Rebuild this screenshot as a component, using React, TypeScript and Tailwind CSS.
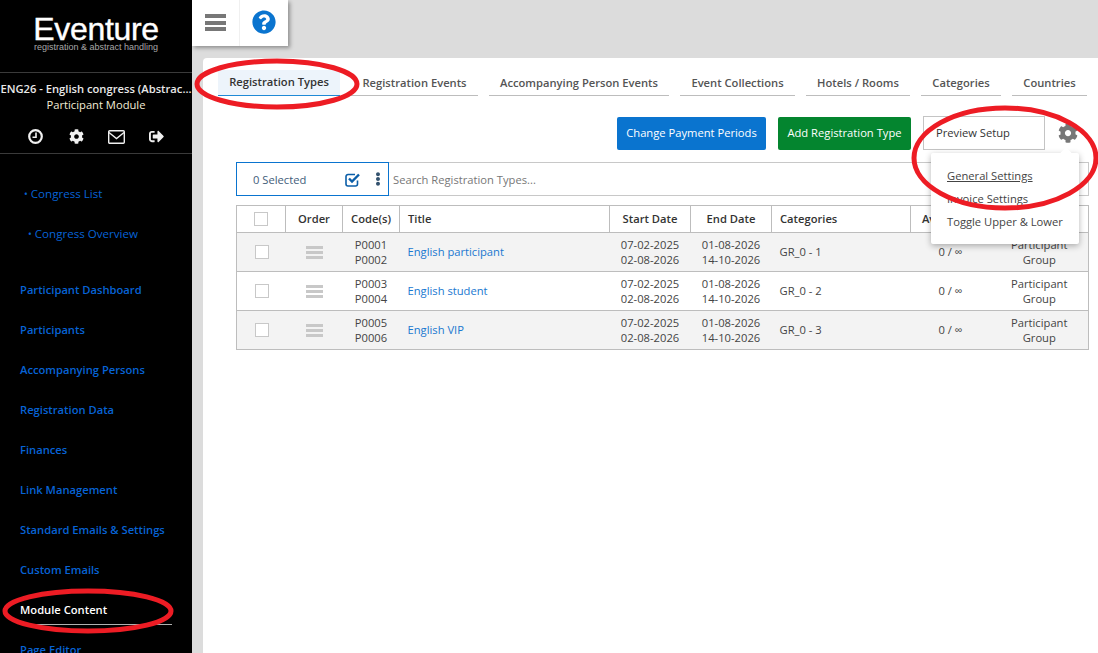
import { FaCog, FaEllipsisV, FaQuestionCircle, FaSignOutAlt } from "react-icons/fa";

const sideLinks = [
  "Participant Dashboard",
  "Participants",
  "Accompanying Persons",
  "Registration Data",
  "Finances",
  "Link Management",
  "Standard Emails & Settings",
  "Custom Emails",
];

const tabs = [
  { label: "Registration Events", width: "w-[127px]" },
  { label: "Accompanying Person Events", width: "w-[180px]" },
  { label: "Event Collections", width: "w-[115px]" },
  { label: "Hotels / Rooms", width: "w-[104px]" },
  { label: "Categories", width: "w-[80px]" },
  { label: "Countries", width: "w-[75px]" },
];

const rows = [
  { codes: ["P0001", "P0002"], title: "English participant", cat: "GR_0 - 1", shade: true },
  { codes: ["P0003", "P0004"], title: "English student", cat: "GR_0 - 2", shade: false },
  { codes: ["P0005", "P0006"], title: "English VIP", cat: "GR_0 - 3", shade: true },
];

function Box() {
  return <div className="h-[14px] w-[14px] border border-[#c8c8c8] bg-white" />;
}

function Sidebar() {
  return (
    <aside className="flex h-[653px] w-[192px] shrink-0 flex-col overflow-hidden bg-black text-white">
      {/* logo */}
      <div className="flex h-[73px] shrink-0 flex-col items-center border-b border-[#3a3a3a] pt-[15px]">
        <div className="text-[32px] leading-[28px] tracking-[-0.35px] [font-family:'Liberation_Sans',sans-serif] [-webkit-text-stroke:0.4px_white]">Eventure</div>
        <div className="text-[9px] leading-[9px] text-[#a8a8a8] [font-family:'Liberation_Sans',sans-serif]">registration &amp; abstract handling</div>
      </div>
      {/* congress */}
      <div className="flex h-[81px] shrink-0 flex-col border-b border-[#3a3a3a]">
        <div className="mt-[8px] whitespace-nowrap text-center text-[11.2px] font-semibold leading-[16px] text-[#e8e8e8]">ENG26 - English congress (Abstrac...</div>
        <div className="text-center text-[11.2px] leading-[16px] text-[#f3ecd6]">Participant Module</div>
        <div className="mt-[16px] flex items-center pl-[16px] text-[#f0f0f0]">
          <div className="ml-[-1px] flex w-[41px] justify-center pr-[1px]">
            <svg width="15" height="15" viewBox="0 0 15 15" fill="none" stroke="currentColor" strokeWidth="2.2">
              <circle cx="7.5" cy="7.5" r="6.3" />
              <path d="M8 3.5V8.2H4.5" strokeWidth="1.6" />
            </svg>
          </div>
          <div className="flex w-[40px] justify-center"><FaCog className="h-[15px] w-[15px]" /></div>
          <div className="flex w-[40px] justify-center">
            <svg width="17" height="14" viewBox="0 0 17 14" fill="none" stroke="currentColor" strokeWidth="1.4">
              <rect x="0.7" y="0.7" width="15.6" height="12.6" rx="1" />
              <path d="M1 2.5L8.5 8.5L16 2.5" />
            </svg>
          </div>
          <div className="flex w-[40px] justify-center"><FaSignOutAlt className="h-[15px] w-[15px]" /></div>
        </div>
      </div>
      {/* nav */}
      <nav className="flex flex-col text-[11.2px] font-semibold text-[#0763d6]">
        <div className="mt-[30px] flex h-[20px] items-center pl-[24px] text-[11.6px] font-normal">
          <span className="mr-[3px] text-[10px]">•</span>Congress List
        </div>
        <div className="mt-[20px] flex h-[20px] items-center pl-[28px] text-[11.6px] font-normal">
          <span className="mr-[3px] text-[10px]">•</span>Congress Overview
        </div>
        <div className="mt-[36px] flex flex-col gap-[20px] pl-[20px]">
          {sideLinks.map((l) => (
            <div key={l} className="flex h-[20px] items-center whitespace-nowrap">{l}</div>
          ))}
          <div className="flex flex-col">
            <div className="flex h-[20px] items-center text-white">Module Content</div>
            <div className="ml-[16px] mt-[4px] h-px w-[136px] bg-[#b0b0b0]" />
          </div>
          <div className="mt-[-5px] flex h-[20px] items-center">Page Editor</div>
        </div>
      </nav>
    </aside>
  );
}

function Toolbar() {
  return (
    <div className="ml-[33px] mr-[9px] mt-[12px] flex h-[34px] border-y border-r border-[#c8c8c8] text-[11.2px]">
      <div className="my-[-1px] flex w-[153px] shrink-0 items-center border border-[#0a74cf] pl-[16px] text-[#3f5d7a]">
        <span className="w-[76px] pt-[2px]">0 Selected</span>
        <svg className="ml-[16px]" width="16" height="15" viewBox="0 0 16 15" fill="none" stroke="#0b5ea8">
          <path d="M12.5 8.5V12a2 2 0 0 1-2 2H3a2 2 0 0 1-2-2V4.5a2 2 0 0 1 2-2h7" strokeWidth="1.6" />
          <path d="M4 6.5L7 9.5L14 2.5" strokeWidth="2.4" />
        </svg>
        <FaEllipsisV className="ml-[10px] h-[14px] w-[14px] text-[#33526e]" />
      </div>
      <div className="flex items-center pl-[4px] pt-[2px] text-[#777]">Search Registration Types...</div>
    </div>
  );
}

function Table() {
  return (
    <table className="ml-[33px] mt-[9px] w-[852px] table-fixed border-collapse border border-[#bdbdbd] text-[11.2px] text-[#444]">
      <colgroup>
        <col className="w-[49px]" />
        <col className="w-[57px]" />
        <col className="w-[57px]" />
        <col className="w-[210px]" />
        <col className="w-[81px]" />
        <col className="w-[81px]" />
        <col className="w-[139px]" />
        <col className="w-[80px]" />
        <col className="w-[98px]" />
      </colgroup>
      <thead>
        <tr className="h-[27px] text-[#333]">
          <th className="border border-[#bdbdbd] font-semibold"><div className="flex justify-center pr-[1px]"><Box /></div></th>
          <th className="border border-[#bdbdbd] font-semibold">Order</th>
          <th className="border border-[#bdbdbd] font-semibold">Code(s)</th>
          <th className="border border-[#bdbdbd] pl-[8px] text-left font-semibold">Title</th>
          <th className="border border-[#bdbdbd] font-semibold">Start Date</th>
          <th className="border border-[#bdbdbd] font-semibold">End Date</th>
          <th className="border border-[#bdbdbd] pl-[8px] text-left font-semibold">Categories</th>
          <th className="border border-[#bdbdbd] pr-[8px] font-semibold">Available</th>
          <th className="border border-[#bdbdbd] font-semibold">Group</th>
        </tr>
      </thead>
      <tbody>
        {rows.map((r) => (
          <tr key={r.title} className={`h-[39px] border-b border-[#bdbdbd] leading-[15px] ${r.shade ? "bg-[#f3f3f3]" : "bg-white"}`}>
            <td><div className="flex justify-center pl-[1px]"><Box /></div></td>
            <td>
              <div className="flex flex-col items-center gap-[2px]">
                <div className="h-[3px] w-[17px] bg-[#c8c8c8]" />
                <div className="h-[3px] w-[17px] bg-[#c8c8c8]" />
                <div className="h-[3px] w-[17px] bg-[#c8c8c8]" />
              </div>
            </td>
            <td className="text-center">{r.codes[0]}<br />{r.codes[1]}</td>
            <td className="pb-[2px] pl-[8px] text-[#1a78d0]">{r.title}</td>
            <td className="text-center">07-02-2025<br />02-08-2026</td>
            <td className="text-center">01-08-2026<br />14-10-2026</td>
            <td className="pb-[2px] pl-[8px]">{r.cat}</td>
            <td className="pb-[2px] text-center">0 / ∞</td>
            <td className="text-center">Participant<br />Group</td>
          </tr>
        ))}
      </tbody>
    </table>
  );
}

export default function App() {
  return (
    <div className="relative flex h-[653px] w-[1098px] overflow-hidden bg-[#dcdcdc] font-['Open_Sans',sans-serif]">
      <Sidebar />
      <main className="flex min-w-0 flex-1 flex-col">
        {/* top bar */}
        <div className="flex h-[46px] w-[96px] shrink-0 bg-white shadow-[2px_2px_4px_rgba(0,0,0,0.35)]">
          <div className="flex w-[48px] flex-col items-center justify-center gap-[2.5px] border-r border-[#f0f0f0] pb-[1px]">
            <div className="h-[4px] w-[21px] bg-[#777]" />
            <div className="h-[4px] w-[21px] bg-[#777]" />
            <div className="h-[4px] w-[21px] bg-[#777]" />
          </div>
          <div className="flex flex-1 items-center justify-center pb-[2px]">
            <FaQuestionCircle className="h-[24px] w-[24px] text-[#0a74cf]" />
          </div>
        </div>

        {/* card */}
        <section className="ml-[11px] mt-[12px] flex-1 rounded-tl-[4px] bg-white">
          <div className="flex h-[38px] items-end gap-[11px] pl-[15px] text-[11.2px] font-semibold text-[#555]">
            <div className="flex h-[26px] w-[122px] items-center justify-center border-b border-[#1f8ad6] bg-[#edf4fb] text-[#333]">Registration Types</div>
            {tabs.map((t) => (
              <div key={t.label} className={`flex h-[25px] items-center justify-center whitespace-nowrap border-b border-[#bdbdbd] ${t.width}`}>{t.label}</div>
            ))}
          </div>

          <div className="mt-[20px] flex h-[34px] items-center pl-[414px] text-[11.2px]">
            <div className="flex h-[33px] w-[149px] items-center justify-center rounded-[2px] bg-[#0a74cf] text-white">Change Payment Periods</div>
            <div className="ml-[12px] flex h-[33px] w-[133px] items-center justify-center rounded-[2px] bg-[#04852f] text-white">Add Registration Type</div>
            <div className="ml-[12px] flex h-[34px] w-[122px] items-center border border-[#c4c4c4] pl-[12px] text-[#333]">Preview Setup</div>
            <FaCog className="ml-[13px] h-[20px] w-[20px] text-[#777]" />
          </div>

          <Toolbar />
          <Table />
        </section>
      </main>

      {/* settings dropdown */}
      <div className="absolute left-[931px] top-[153px] flex h-[91px] w-[148px] flex-col justify-center gap-[8px] rounded-[2px] bg-white pl-[16px] text-[11.2px] leading-[15px] text-[#444] shadow-[0_2px_6px_rgba(0,0,0,0.3)]">
        <div className="absolute left-[131px] top-[-4px] h-[8px] w-[8px] rotate-45 bg-white" />
        <div className="underline">General Settings</div>
        <div>Invoice Settings</div>
        <div>Toggle Upper &amp; Lower</div>
      </div>

      {/* red hand-drawn annotations */}
      <svg className="pointer-events-none absolute left-0 top-0" width="1098" height="653" fill="none" stroke="#ed1c24" strokeWidth="5">
        <ellipse cx="277" cy="84" rx="80" ry="23" />
        <ellipse cx="88" cy="611" rx="83" ry="20" />
        <ellipse cx="1005" cy="158" rx="91" ry="50" />
      </svg>
    </div>
  );
}
